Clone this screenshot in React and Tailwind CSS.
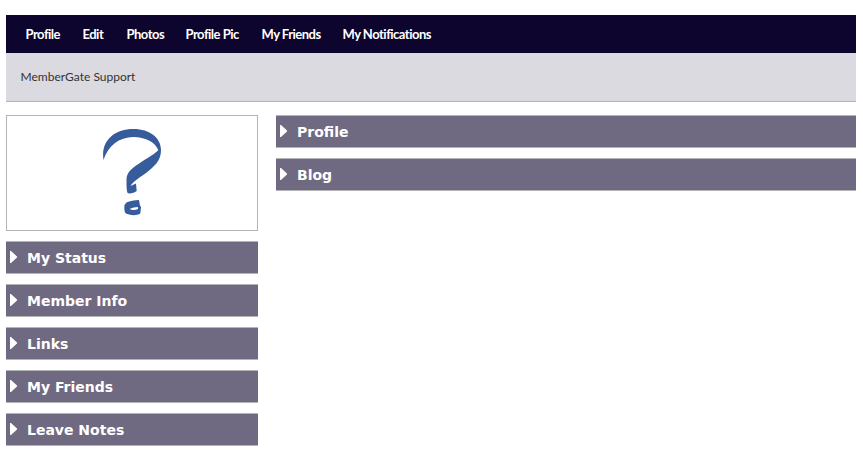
const NAV_ITEMS = [
    { label: 'Profile', width: 'w-[57px]' },
    { label: 'Edit', width: 'w-[44px]' },
    { label: 'Photos', width: 'w-[59px]' },
    { label: 'Profile Pic', width: 'w-[76px]' },
    { label: 'My Friends', width: 'w-[81px]' },
    { label: 'My Notifications', width: 'w-[100px]' },
];

const SIDE_PANELS = ['My Status', 'Member Info', 'Links', 'My Friends', 'Leave Notes'];
const MAIN_PANELS = ['Profile', 'Blog'];

const Panel = ({ title }) => (
    <button type="button" className="flex h-[33px] w-full items-center border-y border-[#b4b3b6] bg-[#6f6a82] pl-1 text-left">
        <svg width="8" height="12" viewBox="0 0 8 12" className="mb-0.5 mr-[9px] shrink-0" fill="white">
            <path d="M0 0h1l6 5.500v1l-6 5.500H0z" />
        </svg>
        <span className="whitespace-nowrap font-['DejaVu_Sans',Verdana,sans-serif] text-[14px] font-bold leading-5 text-white">{title}</span>
    </button>
);

const QuestionMark = () => (
    <svg width="60" height="88" viewBox="0 0 60 88" fill="#365c9c">
        <path d="M1.500 31C-1.500 12 12 0 31.500 0 48 0 59 9 59 21c0 9-4 14-12.500 21C39 48 31 52 28.500 57L34 54.500l.7 7.500c-2 1.500-5.500 2.700-8.700 2.300-1.500-.8-1.500-8-1.500-14 0-8 7.500-12.500 15.200-17.600C47 28 53 25 56.300 21 53 13 43 8 31.500 8 17 8 6 17 1.500 31z" />
        <path fillRule="evenodd" d="M22.500 76l2-2.500C28 72 32 71 37 71l1 5.500 1 1.500-.7 6.500c-4 2.500-11 2-15-.5-1-2-1.200-5-.8-8zM27.500 80c2.500 1.200 6 1.200 8.500 0v-2c-3 .3-6 .7-8.500 2z" />
    </svg>
);

const App = () => (
    <div className="h-[453px] overflow-hidden bg-white pl-1.5 pr-[7px] pt-[15px]">
        <nav className="flex h-[38px] items-center bg-[#0d052d] pl-[19.5px]">
            {NAV_ITEMS.map(({ label, width }) => (
                <a key={label} href="#" className={`${width} shrink-0 whitespace-nowrap font-[Lato,sans-serif] text-[13px] font-bold leading-5 tracking-[-0.5px] text-white`}>
                    {label}
                </a>
            ))}
        </nav>
        <div className="flex h-[49px] items-center border-b border-[#b4b3b6] bg-[#dbdae0] pl-[14.5px] font-[Lato,sans-serif] text-[12px] text-[#333333]">
            MemberGate Support
        </div>
        <div className="mt-[13px] flex gap-[18px]">
            <aside className="flex w-[252px] shrink-0 flex-col gap-2.5">
                <div className="flex h-[116px] items-center justify-center border border-[#b4b3b6]">
                    <QuestionMark />
                </div>
                {SIDE_PANELS.map((title) => (
                    <Panel key={title} title={title} />
                ))}
            </aside>
            <main className="flex flex-1 flex-col gap-2.5">
                {MAIN_PANELS.map((title) => (
                    <Panel key={title} title={title} />
                ))}
            </main>
        </div>
    </div>
);

export default App;
